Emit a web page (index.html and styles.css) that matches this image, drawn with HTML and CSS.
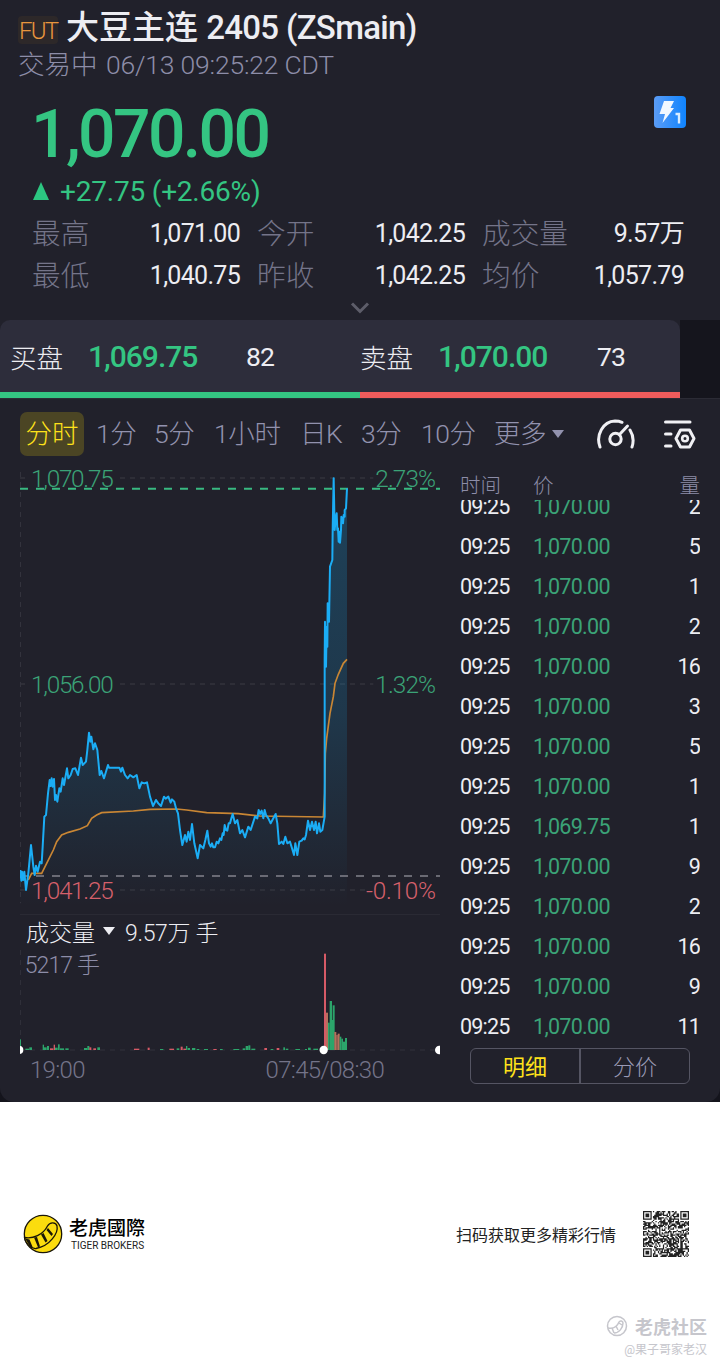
FILE: index.html
```
<!DOCTYPE html>
<html lang="zh-CN">
<head>
    <meta charset="UTF-8">
    <meta name="viewport" content="width=device-width, initial-scale=1.0">
    <title>大豆主连 2405 (ZSmain)</title>
    <link rel="stylesheet" href="styles.css">
</head>
<body>

    <div class="panel-wrap">
    <main class="panel">

        <!-- Title and price -->
        <header class="title">
            <span class="badge">FUT</span>
            <h1>大豆主连 <span class="code">2405 (ZSmain)</span></h1>
        </header>
        <div class="status">交易中 <span class="clock">06/13 09:25:22 CDT</span></div>

        <div class="price-row">
            <div class="price">1,070.00</div>
            <svg class="level-icon" width="32" height="32" viewBox="0 0 32 32">
                <defs>
                    <linearGradient id="level" x1="0" y1="0" x2="1" y2="0">
                        <stop offset="0" stop-color="#5b9cf5"/>
                        <stop offset="1" stop-color="#0f84ff"/>
                    </linearGradient>
                </defs>
                <rect width="32" height="32" rx="4" fill="url(#level)"/>
                <path d="M10 5h10l-3.500 7H20L8.500 27 11 18H5.500z" fill="#f2f8ff"/>
                <path d="M21.500 18H25v9.500" fill="none" stroke="#d8ecff" stroke-width="2.400"/>
            </svg>
        </div>
        <div class="change"><i class="up"></i><span>+27.75 (+2.66%)</span></div>

        <div class="stats">
            <div class="stat"><span>最高</span><b>1,071.00</b></div>
            <div class="stat"><span>今开</span><b>1,042.25</b></div>
            <div class="stat"><span>成交量</span><b>9.57<em>万</em></b></div>
            <div class="stat"><span>最低</span><b>1,040.75</b></div>
            <div class="stat"><span>昨收</span><b>1,042.25</b></div>
            <div class="stat"><span>均价</span><b>1,057.79</b></div>
        </div>
        <div class="expand">
            <svg width="20" height="12" viewBox="0 0 20 12"><path d="M2 1.500l8 8 8-8" fill="none" stroke="#5d5d69" stroke-width="3"/></svg>
        </div>

        <!-- Bid / ask -->
        <section class="quotes">
            <div class="quote bid"><span class="side">买盘</span><span class="value">1,069.75</span><span class="size">82</span></div>
            <div class="quote ask"><span class="side">卖盘</span><span class="value">1,070.00</span><span class="size">73</span></div>
        </section>

        <nav class="tabs">
            <span class="tab active">分时</span>
            <span class="tab t1">1分</span>
            <span class="tab t5">5分</span>
            <span class="tab th">1小时</span>
            <span class="tab td">日K</span>
            <span class="tab t3">3分</span>
            <span class="tab t10">10分</span>
            <span class="tab more">更多<i class="down"></i></span>
            <svg class="gauge" width="40" height="34" viewBox="0 0 40 34" fill="none" stroke="#f0f0f4" stroke-width="3" stroke-linecap="round">
                <path d="M4 29C-.5 17 7 3.500 19 3q4 0 7 1.300"/>
                <path d="M34 12q5 8 2 17"/>
                <circle cx="19.500" cy="21" r="5.700"/>
                <path d="M23.500 16.500L31.500 8"/>
            </svg>
            <svg class="settings" width="33" height="32" viewBox="0 0 33 32" fill="none" stroke="#f0f0f4" stroke-width="3" stroke-linecap="round" stroke-linejoin="round">
                <path d="M1.500 4H26M1.500 16h5.500M1.500 28h5.500"/>
                <path d="M16.500 12h9l4.500 8.500-4.500 8.500h-9L12 20.500z"/>
                <circle cx="21" cy="20.500" r="2.800" stroke-width="2.600"/>
            </svg>
        </nav>

        <section class="board">
            <div class="charts">
                <!-- Minute line: blue is price, orange is average -->
                <svg class="price-chart" viewBox="60 0 1260 1365">
                    <defs>
                        <linearGradient id="fade" gradientUnits="userSpaceOnUse" x1="0" y1="50" x2="0" y2="1340">
                            <stop offset="0" stop-color="#14a4e6" stop-opacity=".25"/>
                            <stop offset=".55" stop-color="#14a4e6" stop-opacity=".17"/>
                            <stop offset="1" stop-color="#14a4e6" stop-opacity="0"/>
                        </linearGradient>
                    </defs>
                    <g class="grid">
                        <path d="M60 54H90M360 54H1120M60 672H90M360 672H1120M60 1290H90M360 1290H1095M61 36V1330"/>
                        <path class="solid" d="M60 1364H1320"/>
                    </g>
                    <polygon id="area" class="area"/>
                    <path class="last" d="M60 86H1320"/>
                    <path class="prev" d="M60 1248H1320"/>
                    <polyline class="average" points="85,1260 95,1240 125,1240 140,1210 160,1170 170,1145 185,1125 205,1117 240,1107 262,1097 275,1075 290,1065 305,1058 400,1053 450,1048 530,1047 560,1050 620,1058 715,1061 780,1068 970,1071 974,1000 976,880 980,835 990,760 1000,710 1005,670 1015,643 1030,610 1041,598"/>
                    <polyline id="line" class="line" points="61,1230 64,1262 66,1235 70,1260 73,1235 78,1290 82,1262 85,1240 93,1155 100,1220 104,1245 108,1217 113,1235 120,1205 125,1210 128,1160 133,1070 138,1065 144,1000 149,960 152,978 155,955 158,980 162,957 165,1020 168,1005 172,1025 178,985 182,995 188,955 192,975 201,925 205,955 212,945 218,927 226,925 234,945 243,893 248,915 258,905 262,870 267,818 271,845 274,830 280,868 285,850 292,870 299,945 304,933 312,955 324,915 327,923 358,923 363,935 367,923 375,945 383,955 390,945 400,952 410,945 418,985 425,967 433,970 441,967 450,1010 459,1038 468,1020 475,1030 483,1038 492,1010 497,1016 505,1010 512,1028 516,1018 523,1025 528,1045 534,1060 540,1110 547,1155 555,1125 560,1145 565,1115 570,1140 576,1092 583,1150 593,1195 600,1155 605,1160 610,1165 616,1140 622,1112 627,1150 632,1160 636,1150 640,1162 645,1162 650,1145 655,1150 660,1135 664,1140 668,1120 671,1125 674,1095 678,1110 682,1112 686,1090 690,1090 694,1075 698,1062 705,1090 712,1080 720,1120 727,1110 735,1132 745,1100 752,1110 765,1070 772,1075 776,1050 780,1062 785,1052 790,1075 794,1050 798,1065 805,1075 812,1090 820,1075 827,1062 832,1090 837,1152 845,1145 850,1152 856,1130 862,1150 870,1145 876,1165 882,1185 886,1150 892,1185 898,1145 905,1142 910,1135 914,1138 918,1125 924,1082 930,1110 936,1085 942,1110 947,1085 951,1120 957,1090 961,1115 967,1110 974,1070 974,600 975,485 978,620 980,500 982,560 983,430 987,485 990,320 997,300 998,210 1001,55 1004,210 1007,175 1010,160 1012,210 1014,205 1016,245 1018,215 1020,248 1023,210 1024,170 1029,190 1031,165 1034,170 1034,150 1038,145 1041,85"/>
                    <g class="axis up-text">
                        <text x="93" y="82" textLength="248">1,070.75</text>
                        <text x="93" y="699" textLength="248">1,056.00</text>
                        <text x="1126" y="82" textLength="182">2.73%</text>
                        <text x="1126" y="699" textLength="182">1.32%</text>
                    </g>
                    <g class="axis down-text">
                        <text x="93" y="1317" textLength="248">1,041.25</text>
                        <text x="1098" y="1317" textLength="210">-0.10%</text>
                    </g>
                </svg>

                <div class="volume-head">成交量<i class="down"></i><span>9.57万 手</span></div>
                <svg class="volume-chart" viewBox="60 147 1260 321">
                    <path class="v-grid" d="M61 150V440M60 450H1320"/>
                    <text x="74" y="219" textLength="226">5217 手</text>
                    <g id="bars"></g>
                    <g fill="#fff">
                        <circle cx="58" cy="450" r="12"/>
                        <circle cx="971" cy="450" r="12.500"/>
                        <circle cx="1318" cy="450" r="13"/>
                    </g>
                </svg>
                <div class="times"><span>19:00</span><span>07:45/08:30</span></div>
            </div>

            <!-- Trade ticks -->
            <aside class="ticks">
                <div class="tick-head"><span>时间</span><span>价</span><span>量</span></div>
                <div class="tick-list">
                    <div class="tick"><span>09:25</span><span>1,070.00</span><span>2</span></div>
                    <div class="tick"><span>09:25</span><span>1,070.00</span><span>5</span></div>
                    <div class="tick"><span>09:25</span><span>1,070.00</span><span>1</span></div>
                    <div class="tick"><span>09:25</span><span>1,070.00</span><span>2</span></div>
                    <div class="tick"><span>09:25</span><span>1,070.00</span><span>16</span></div>
                    <div class="tick"><span>09:25</span><span>1,070.00</span><span>3</span></div>
                    <div class="tick"><span>09:25</span><span>1,070.00</span><span>5</span></div>
                    <div class="tick"><span>09:25</span><span>1,070.00</span><span>1</span></div>
                    <div class="tick"><span>09:25</span><span>1,069.75</span><span>1</span></div>
                    <div class="tick"><span>09:25</span><span>1,070.00</span><span>9</span></div>
                    <div class="tick"><span>09:25</span><span>1,070.00</span><span>2</span></div>
                    <div class="tick"><span>09:25</span><span>1,070.00</span><span>16</span></div>
                    <div class="tick"><span>09:25</span><span>1,070.00</span><span>9</span></div>
                    <div class="tick"><span>09:25</span><span>1,070.00</span><span>11</span></div>
                </div>
                <div class="switch"><span class="on">明细</span><span>分价</span></div>
            </aside>
        </section>
    </main>
    </div>

    <footer class="footer">
        <div class="brand">
            <svg width="40" height="40" viewBox="0 0 40 40">
                <circle cx="20" cy="20" r="18.700" fill="#fbdc0e" stroke="#1a1608" stroke-width="1.300"/>
                <path d="M1.500 23.500C10 25 20 21 24.500 12 27 7.500 33 8 34 12 35.500 19 27 32 13 34.500 8 35 2 29 1.500 23.500z" fill="#fbdc0e" stroke="#1a1608" stroke-width="1.300"/>
                <path d="M2 24.500l4.500 1L10 34l-3-1.500zM11 23.500l3-.5 3 9.500-2 .8zM18 20.500l2.500-1.500 4 8-2 1.500zM23.500 16l1.500-2 5 6-1.500 2z" fill="#1a1608"/>
            </svg>
            <div class="brand-name">
                <strong>老虎國際</strong>
                <small>TIGER BROKERS</small>
            </div>
        </div>
        <div class="scan">
            <span>扫码获取更多精彩行情</span>
            <svg id="qr" width="46" height="46" viewBox="0 0 37 37"></svg>
        </div>
    </footer>
    <div class="watermark">
        <div class="community">
            <svg width="22" height="22" viewBox="0 0 22 22" fill="none" stroke="#c6c6cc" stroke-width="1.500">
                <circle cx="11" cy="11" r="9.500"/>
                <path d="M2 13c5 1 9-1 11-6 1-2 4-1 4 1 0 5-4 10-9 10"/>
                <path d="M6 13l2 5M10 11l2 4M13 8l3 2"/>
            </svg>
            <span>老虎社区</span>
        </div>
        <div class="author">@果子哥家老汉</div>
    </div>

    <script>
        // Close the price line down to the bottom for the shaded area
        const points = document.getElementById('line').getAttribute('points');
        document.getElementById('area').setAttribute('points', points + ' 1041,1340 61,1340');

        // Volume bars: [x, height, width, color index]
        const bars = [
            [60, 32, 3, 1], [76, 4, 12, 1], [88, 8, 8, 1], [128, 16, 4, 1], [132, 8, 8, 1], [141, 12, 6, 1], [150, 5, 10, 0],
            [161, 16, 4, 0], [165, 7, 8, 1], [174, 17, 5, 1], [180, 5, 12, 1], [196, 5, 10, 1], [252, 6, 10, 1], [262, 12, 6, 1],
            [268, 8, 6, 0], [280, 5, 8, 0], [292, 8, 8, 1], [402, 4, 16, 0], [443, 7, 6, 0], [480, 3, 10, 1], [508, 4, 14, 0],
            [530, 5, 8, 1], [542, 10, 6, 0], [550, 4, 8, 0], [558, 12, 4, 1], [563, 6, 7, 1], [576, 6, 10, 1], [590, 3, 8, 1],
            [612, 3, 12, 1], [640, 3, 10, 0], [660, 3, 8, 1], [700, 3, 18, 1], [728, 5, 8, 1], [737, 12, 8, 1], [745, 14, 6, 1],
            [754, 4, 12, 1], [793, 6, 8, 0], [812, 3, 8, 1], [830, 6, 8, 0], [850, 8, 5, 1], [857, 4, 8, 1], [886, 3, 14, 1],
            [915, 3, 6, 1], [924, 7, 8, 1], [940, 4, 14, 1],
            [972, 289, 6, 0], [978, 112, 6, 2], [984, 82, 5, 1], [989, 147, 7, 1], [996, 90, 3, 1], [998, 134, 6, 1], [1003, 54, 6, 2],
            [1009, 45, 4, 2], [1013, 49, 6, 2], [1019, 40, 5, 1], [1024, 34, 5, 1], [1029, 25, 6, 1], [1035, 36, 6, 1]
        ];
        const colors = ['#d65a66', '#2ca56b', '#b5705c'];
        document.getElementById('bars').innerHTML = bars.map(([x, h, w, color]) =>
            `<rect x="${x}" y="${450 - h}" width="${w}" height="${h}" fill="${colors[color]}"/>`).join('');

        // QR modules
        const size = 37;
        let seed = 20240613;
        let d = '';
        function inFinder(x, y) {
            return (x < 8 && y < 8) || (x > size - 9 && y < 8) || (x < 8 && y > size - 9);
        }
        for (let y = 0; y < size; y++) {
            for (let x = 0; x < size; x++) {
                seed = (seed * 1103515245 + 12345) % 2147483648;
                if (!inFinder(x, y) && seed / 2147483648 < 0.6) {
                    d += `M${x} ${y}h1v1h-1z`;
                }
            }
        }
        [[0, 0], [size - 7, 0], [0, size - 7]].forEach(([x, y]) => {
            d += `M${x} ${y}h7v7h-7zM${x + 1} ${y + 1}v5h5v-5zM${x + 2} ${y + 2}h3v3h-3z`;
        });
        document.getElementById('qr').innerHTML = `<path d="${d}" fill="#222"/>`;
    </script>

</body>
</html>
```
FILE: styles.css
```
* {
    box-sizing: border-box;
}

body {
    margin: 0;
    background-color: #fff;
    color: #ededf2;
    font-family: Roboto, "Noto Sans CJK SC", sans-serif;
    font-weight: 300;
    white-space: nowrap;
}

svg {
    display: block;
    flex: none;
}

i {
    display: inline-block;
    flex: none;
}

b, em {
    font-weight: inherit;
    font-style: normal;
}

.panel-wrap {
    background-color: #14141c;
}

.panel {
    height: 1102px;
    overflow: hidden;
    border-radius: 0 0 14px 14px;
    background-color: #21212b;
}

/* Title and price */
.title {
    display: flex;
    align-items: center;
    gap: 8px;
    height: 46px;
    padding: 10px 0 0 18px;
}

.badge {
    width: 40px;
    height: 28px;
    padding-left: 1px;
    margin-top: 4px;
    border-radius: 4px;
    background-color: #2d2829;
    color: #e8963e;
    font-size: 24px;
    line-height: 30px;
    letter-spacing: -1.8px;
}

h1 {
    margin: 0;
    font-size: 33px;
    line-height: 38px;
    font-weight: 500;
}

.code {
    letter-spacing: -0.7px;
}

.status {
    height: 38px;
    padding-left: 18px;
    color: #8d8da8;
    font-size: 26.5px;
    line-height: 38px;
}

.clock {
    margin-left: 2px;
    letter-spacing: -0.2px;
}

.price-row {
    display: flex;
    justify-content: space-between;
    height: 88px;
    padding: 12px 34px 0 31px;
}

.price {
    color: #34c582;
    font-size: 66px;
    line-height: 78px;
    font-weight: 500;
    letter-spacing: -2.6px;
}

.change {
    display: flex;
    align-items: center;
    gap: 11px;
    height: 38px;
    padding-left: 33px;
    color: #34c582;
    font-size: 28px;
    font-weight: 400;
    letter-spacing: -0.2px;
}

.up {
    border: 8px solid transparent;
    border-top: 0;
    border-bottom: 18px solid #2cc681;
}

.stats {
    display: grid;
    grid-template-columns: 208px 208px 202px;
    grid-auto-rows: 42px;
    column-gap: 17px;
    padding: 3px 0 0 32px;
}

.stat {
    display: flex;
    justify-content: space-between;
    align-items: center;
    line-height: 42px;
}

.stat span {
    color: #747489;
    font-size: 28.7px;
}

.stat b {
    font-size: 25px;
    font-weight: 400;
    letter-spacing: -0.7px;
}

.expand {
    display: flex;
    justify-content: center;
    height: 23px;
    padding-top: 5px;
}

/* Bid / ask */
.quotes {
    display: flex;
    height: 79px;
    padding-right: 40px;
    border-bottom: 1px solid #2b2b35;
    background: linear-gradient(#15151d, #15151d) right / 40px 100% no-repeat;
}

.quote {
    display: flex;
    align-items: center;
    width: 360px;
    font-size: 26.5px;
    background-color: #2d2d3b;
    border-bottom: 6px solid #34c582;
    border-top-left-radius: 10px;
}

.bid {
    padding-left: 10px;
}

.ask {
    width: 320px;
    border-radius: 0 10px 0 0;
    border-bottom-color: #ef5c5c;
}

.side {
    width: 78px;
}

.value {
    width: 158px;
    color: #34c582;
    font-size: 30px;
    font-weight: 500;
    letter-spacing: -1px;
}

.size {
    font-weight: 400;
    letter-spacing: -0.8px;
}

.ask .size {
    margin-left: 1px;
}

/* Period tabs */
.tabs {
    display: flex;
    align-items: center;
    height: 61px;
    padding: 9px 0 0 20px;
    color: #9292ae;
    font-size: 26.5px;
    letter-spacing: -0.4px;
}

.tab {
    flex: none;
    line-height: 44px;
}

.tab.active {
    width: 64px;
    margin-right: 12px;
    border-radius: 7px;
    background-color: #4b4524;
    color: #ffe21a;
    text-align: center;
    letter-spacing: 0;
}

.t1 {
    width: 58px;
}

.t5 {
    width: 60px;
}

.th {
    width: 86px;
}

.td {
    width: 61px;
}

.t3 {
    width: 60px;
}

.t10 {
    width: 73px;
}

.more {
    display: flex;
    align-items: center;
    gap: 6px;
    width: 102px;
}

.down {
    border: 6px solid transparent;
    border-bottom: 0;
    border-top: 8px solid currentColor;
}

.gauge {
    margin: 2px 28px 0 0;
}

/* Charts */
.board {
    display: flex;
    padding-left: 20px;
}

.charts {
    width: 420px;
}

.price-chart {
    width: 420px;
    height: 455px;
}

.grid path, .v-grid {
    fill: none;
    stroke: #33333d;
    stroke-width: 4;
    stroke-dasharray: 15 15;
}

.v-grid {
    stroke-width: 3;
}

.grid .solid {
    stroke: #2c2c37;
    stroke-width: 3;
    stroke-dasharray: none;
}

.area {
    fill: url(#fade);
}

.line {
    fill: none;
    stroke: #1badf5;
    stroke-width: 6;
    stroke-linejoin: round;
}

.average {
    fill: none;
    stroke: #c98634;
    stroke-width: 5;
}

.last, .prev {
    fill: none;
    stroke: #38b981;
    stroke-width: 6;
    stroke-dasharray: 24 24;
}

.prev {
    stroke: #83838c;
    stroke-width: 5;
}

.axis {
    font-size: 73px;
}

.up-text {
    fill: #3ba377;
}

.down-text {
    fill: #d5606b;
}

.volume-head {
    display: flex;
    align-items: center;
    height: 34px;
    padding: 0 0 2px 6px;
    font-size: 23px;
}

.volume-head span {
    letter-spacing: -0.3px;
}

.volume-head .down {
    margin: 0 10px 0 8px;
}

.volume-chart {
    width: 420px;
    height: 107px;
}

.volume-chart text {
    fill: #8d8da8;
    font-size: 69px;
}

.times {
    display: flex;
    justify-content: space-between;
    padding: 0 56px 0 10px;
    color: #747489;
    font-size: 24px;
    line-height: 28px;
    letter-spacing: -0.7px;
}

/* Trade ticks */
.ticks {
    width: 260px;
    padding-left: 20px;
}

.tick-head, .tick {
    display: grid;
    grid-template-columns: 73px 1fr auto;
}

.tick-head {
    height: 40px;
    padding-top: 12px;
    color: #8d8da8;
    font-size: 20.5px;
    line-height: 28px;
}

.tick-list {
    height: 546px;
    overflow: hidden;
}

.tick {
    height: 40px;
    font-size: 21.5px;
    font-weight: 400;
    line-height: 41px;
    letter-spacing: -0.8px;
}

.tick:first-child {
    margin-top: -14px;
}

.tick span:nth-child(2) {
    color: #3ba377;
    letter-spacing: -0.7px;
}

.switch {
    display: flex;
    width: 220px;
    height: 36px;
    margin: 2px 0 0 10px;
    border: 1px solid #555563;
    border-radius: 6px;
    color: #9a9ab5;
    font-size: 22px;
    line-height: 38px;
    text-align: center;
}

.switch span {
    flex: 1;
}

.switch .on {
    border-right: 2px solid #555563;
    color: #ffe21a;
    font-weight: 400;
}

/* Footer */
.footer {
    display: flex;
    align-items: center;
    justify-content: space-between;
    height: 264px;
    padding: 0 31px 0 23px;
    color: #222;
}

.brand, .scan {
    display: flex;
    align-items: center;
}

.brand {
    gap: 6px;
}

.brand-name {
    padding-top: 2px;
}

.brand-name strong {
    display: block;
    color: #000;
    font-size: 19px;
    line-height: 22px;
    font-weight: 500;
}

.brand-name small {
    display: block;
    font-size: 10px;
    line-height: 12px;
    font-weight: 400;
    padding-left: 2px;
}

.scan {
    gap: 27px;
    font-size: 16px;
    font-weight: 400;
}

/* Watermark */
.watermark {
    margin-top: -53px;
    padding-right: 13px;
    color: #c6c6cc;
}

.community {
    display: flex;
    align-items: center;
    justify-content: flex-end;
    gap: 7px;
    height: 26px;
    font-size: 18px;
    font-weight: 700;
}

.author {
    font-size: 12px;
    line-height: 22px;
    font-weight: 400;
    text-align: right;
}
```
